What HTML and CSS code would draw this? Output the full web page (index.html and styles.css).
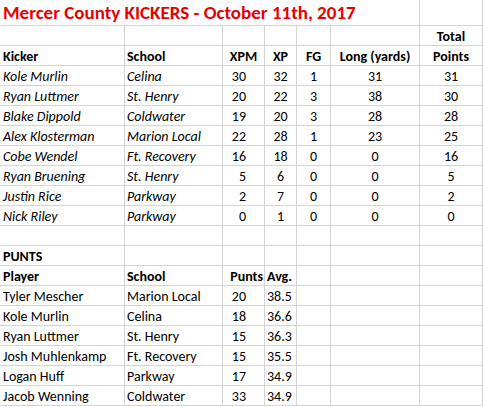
FILE: index.html
```html
<!DOCTYPE html>
<html>
<head>
<meta charset="utf-8">
<link rel="stylesheet" href="styles.css">
</head>
<body>
<div class="sheet">
  <div class="c title span6">Mercer County KICKERS - October 11th, 2017</div><div class="c"></div>

  <div class="c"></div><div class="c"></div><div class="c"></div><div class="c"></div><div class="c"></div><div class="c"></div><div class="c b ctr">Total</div>

  <div class="c b first">Kicker</div><div class="c b">School</div><div class="c b ctr">XPM</div><div class="c b ctr">XP</div><div class="c b ctr">FG</div><div class="c b ctr">Long (yards)</div><div class="c b ctr">Points</div>

  <div class="c i first">Kole Murlin</div><div class="c i">Celina</div><div class="c rt">30</div><div class="c ctr">32</div><div class="c ctr">1</div><div class="c ctr">31</div><div class="c ctr">31</div>
  <div class="c i first">Ryan Luttmer</div><div class="c i">St. Henry</div><div class="c rt">20</div><div class="c ctr">22</div><div class="c ctr">3</div><div class="c ctr">38</div><div class="c ctr">30</div>
  <div class="c i first">Blake Dippold</div><div class="c i">Coldwater</div><div class="c rt">19</div><div class="c ctr">20</div><div class="c ctr">3</div><div class="c ctr">28</div><div class="c ctr">28</div>
  <div class="c i first">Alex Klosterman</div><div class="c i">Marion Local</div><div class="c rt">22</div><div class="c ctr">28</div><div class="c ctr">1</div><div class="c ctr">23</div><div class="c ctr">25</div>
  <div class="c i first">Cobe Wendel</div><div class="c i">Ft. Recovery</div><div class="c rt">16</div><div class="c ctr">18</div><div class="c ctr">0</div><div class="c ctr">0</div><div class="c ctr">16</div>
  <div class="c i first">Ryan Bruening</div><div class="c i">St. Henry</div><div class="c rt">5</div><div class="c ctr">6</div><div class="c ctr">0</div><div class="c ctr">0</div><div class="c ctr">5</div>
  <div class="c i first">Justin Rice</div><div class="c i">Parkway</div><div class="c rt">2</div><div class="c ctr">7</div><div class="c ctr">0</div><div class="c ctr">0</div><div class="c ctr">2</div>
  <div class="c i first">Nick Riley</div><div class="c i">Parkway</div><div class="c rt">0</div><div class="c ctr">1</div><div class="c ctr">0</div><div class="c ctr">0</div><div class="c ctr">0</div>

  <div class="c"></div><div class="c"></div><div class="c"></div><div class="c"></div><div class="c"></div><div class="c"></div><div class="c"></div>

  <div class="c b first">PUNTS</div><div class="c"></div><div class="c"></div><div class="c"></div><div class="c"></div><div class="c"></div><div class="c"></div>

  <div class="c b first">Player</div><div class="c b">School</div><div class="c b rt hdr">Punts</div><div class="c b">Avg.</div><div class="c"></div><div class="c"></div><div class="c"></div>

  <div class="c first">Tyler Mescher</div><div class="c">Marion Local</div><div class="c rt">20</div><div class="c">38.5</div><div class="c"></div><div class="c"></div><div class="c"></div>
  <div class="c first">Kole Murlin</div><div class="c">Celina</div><div class="c rt">18</div><div class="c">36.6</div><div class="c"></div><div class="c"></div><div class="c"></div>
  <div class="c first">Ryan Luttmer</div><div class="c">St. Henry</div><div class="c rt">15</div><div class="c">36.3</div><div class="c"></div><div class="c"></div><div class="c"></div>
  <div class="c first">Josh Muhlenkamp</div><div class="c">Ft. Recovery</div><div class="c rt">15</div><div class="c">35.5</div><div class="c"></div><div class="c"></div><div class="c"></div>
  <div class="c first">Logan Huff</div><div class="c">Parkway</div><div class="c rt">17</div><div class="c">34.9</div><div class="c"></div><div class="c"></div><div class="c"></div>
  <div class="c first">Jacob Wenning</div><div class="c">Coldwater</div><div class="c rt">33</div><div class="c">34.9</div><div class="c"></div><div class="c"></div><div class="c"></div>
</div>
</body>
</html>
```

FILE: styles.css
```css
html, body {
  margin: 0;
  padding: 0;
  background: #ffffff;
}

.sheet {
  display: grid;
  grid-template-columns: 125px 98px 42px 32px 34px 89px 63px;
  grid-template-rows: 26px;
  grid-auto-rows: 20px;
  font-family: Carlito, Lato, "Liberation Sans", sans-serif;
  font-size: 14px;
  color: #000000;
}

.c {
  box-sizing: border-box;
  border-right: 1px solid #d4d4d4;
  border-bottom: 1px solid #d4d4d4;
  display: flex;
  align-items: flex-end;
  justify-content: flex-start;
  padding: 0 2px 0 2px;
  line-height: 16px;
  white-space: nowrap;
  overflow: hidden;
}

.first {
  padding-left: 3px;
}

.span6 {
  grid-column: span 6;
}

.title {
  color: #e60000;
  font-weight: 700;
  font-size: 19px;
  line-height: 22px;
  padding-left: 3px;
  padding-bottom: 1px;
}

.b {
  font-weight: 700;
}

.i {
  font-style: italic;
}

.ctr {
  justify-content: center;
}

.rt {
  justify-content: flex-end;
  padding-right: 18px;
}

.rt.hdr {
  padding-right: 1px;
}
```
